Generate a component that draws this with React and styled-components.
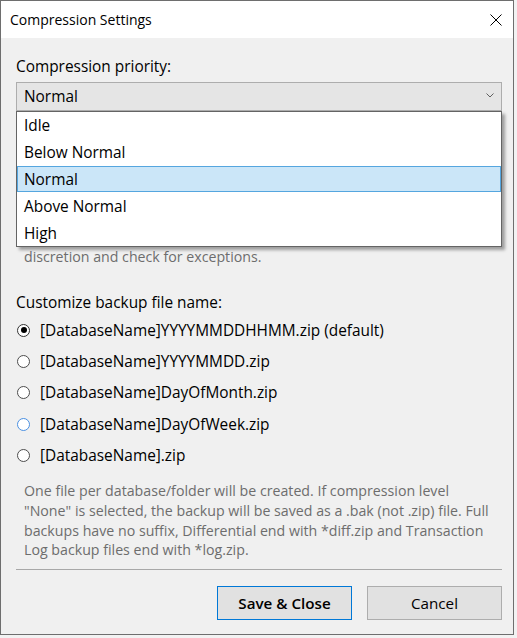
import React from "react";
import styled, { createGlobalStyle } from "styled-components";

const Global = createGlobalStyle`
  html, body {
    margin: 0;
    padding: 0;
    background: #f2f2f2;
  }
  body {
    font-family: "Open Sans", "Noto Sans", sans-serif;
    color: #000;
    -webkit-font-smoothing: antialiased;
  }
`;

const Window = styled.div`
  width: 514px;
  height: 635px;
  box-sizing: border-box;
  border: 1px solid #6e6e6e;
  background: #f0f0f0;
  display: flex;
  flex-direction: column;
`;

const TitleBar = styled.div`
  height: 37px;
  flex: none;
  background: #fff;
  display: flex;
  align-items: center;
  justify-content: space-between;
  padding: 0 11px 0 9px;
`;

const Title = styled.span`
  font-size: 14px;
  line-height: 20px;
  padding-top: 1px;
`;

const CloseButton = styled.span`
  display: flex;
  width: 12px;
  height: 12px;
  margin-top: 1px;
`;

const Body = styled.div`
  flex: 1;
  display: flex;
  flex-direction: column;
  padding: 19px 11px 13px 15px;
  position: relative;
`;

const Label = styled.div`
  font-size: 15.4px;
  line-height: 20px;
  margin-top: ${(p) => p.$top || 0}px;
`;

const ComboWrap = styled.div`
  position: relative;
  margin-top: 5px;
`;

const Combo = styled.div`
  height: 29px;
  box-sizing: border-box;
  border: 1px solid #adadad;
  background: #e5e5e5;
  display: flex;
  align-items: center;
  justify-content: space-between;
  padding: 0 7px;
  font-size: 15.4px;
`;

const Chevron = styled.svg`
  width: 8px;
  height: 5px;
  margin-top: -3px;
`;

/* open list of the combo box, drawn over the hint area below it */
const DropList = styled.ul`
  position: absolute;
  left: 0;
  right: 0;
  top: 100%;
  margin: 0;
  padding: 0;
  list-style: none;
  background: #fff;
  border: 1px solid #646464;
  box-shadow: 3px 3px 3px rgba(0, 0, 0, 0.35);
  z-index: 2;
`;

const DropItem = styled.li`
  height: ${(p) => p.$h}px;
  box-sizing: border-box;
  display: flex;
  align-items: center;
  padding-left: ${(p) => (p.$selected ? 6 : 7)}px;
  font-size: 15.4px;
  background: ${(p) => (p.$selected ? "#cbe6f8" : "transparent")};
  border: ${(p) => (p.$selected ? "1px solid #55a6df" : "none")};
`;

const Note = styled.p`
  margin: ${(p) => p.$top}px 0 0;
  padding-left: 8px;
  font-size: 14.2px;
  line-height: 19.8px;
  color: #6d6d6d;
`;

const NoteLine = styled.span`
  display: block;
  white-space: nowrap;
`;

const RadioGroup = styled.div`
  margin-top: 2px;
  display: flex;
  flex-direction: column;
`;

const RadioRow = styled.label`
  height: 31.25px;
  display: flex;
  align-items: center;
  gap: 10px;
  padding-left: 1px;
  font-size: 15.4px;
`;

const RadioCircle = styled.span`
  width: 13px;
  height: 13px;
  box-sizing: border-box;
  border-radius: 50%;
  border: 1px solid ${(p) => (p.$hover ? "#4a90e2" : p.$checked ? "#333" : "#4d4d4d")};
  background: #fff;
  display: flex;
  align-items: center;
  justify-content: center;
  flex: none;

  &::after {
    content: "";
    width: 6px;
    height: 6px;
    border-radius: 50%;
    background: #000;
    display: ${(p) => (p.$checked ? "block" : "none")};
  }
`;

const Separator = styled.hr`
  margin: 9px 0 0;
  border: none;
  border-top: 1px solid #a8a8a8;
  height: 0;
`;

const ButtonRow = styled.div`
  margin-top: 16px;
  display: flex;
  justify-content: flex-end;
  gap: 15px;
`;

const Button = styled.button`
  width: 135px;
  height: 34px;
  box-sizing: border-box;
  background: #e1e1e1;
  border: 1px solid ${(p) => (p.$primary ? "#0078d7" : "#adadad")};
  font-family: "Open Sans", "Noto Sans", sans-serif;
  font-size: 15.2px;
  font-weight: ${(p) => (p.$primary ? 600 : 400)};
  color: #000;
  padding: 0;
`;

const priorities = [
  { name: "Idle", h: 27 },
  { name: "Below Normal", h: 27 },
  { name: "Normal", h: 26 },
  { name: "Above Normal", h: 28 },
  { name: "High", h: 26 },
];

const fileNames = [
  { text: "[DatabaseName]YYYYMMDDHHMM.zip (default)", checked: true },
  { text: "[DatabaseName]YYYYMMDD.zip" },
  { text: "[DatabaseName]DayOfMonth.zip" },
  { text: "[DatabaseName]DayOfWeek.zip", hover: true },
  { text: "[DatabaseName].zip" },
];

const fileNote = [
  "One file per database/folder will be created. If compression level",
  "\"None\" is selected, the backup will be saved as a .bak (not .zip) file. Full",
  "backups have no suffix, Differential end with *diff.zip and Transaction",
  "Log backup files end with *log.zip.",
];

export default function App() {
  return (
    <>
      <Global />
      <Window>
        <TitleBar>
          <Title>Compression Settings</Title>
          <CloseButton>
            <svg width="12" height="12" viewBox="0 0 12 12">
              <path d="M0.5 0.5 L11.5 11.5 M11.5 0.5 L0.5 11.5" stroke="#000" strokeWidth="1" fill="none" />
            </svg>
          </CloseButton>
        </TitleBar>
        <Body>
          <Label>Compression priority:</Label>
          <ComboWrap>
            <Combo>
              <span>Normal</span>
              <Chevron viewBox="0 0 8 5">
                <polyline points="0.5,0.5 4,4 7.5,0.5" stroke="#606060" strokeWidth="1" fill="none" />
              </Chevron>
            </Combo>
            <DropList>
              {priorities.map((p) => (
                <DropItem key={p.name} $h={p.h} $selected={p.name === "Normal"}>
                  {p.name}
                </DropItem>
              ))}
            </DropList>
          </ComboWrap>
          <Note $top={136}>discretion and check for exceptions.</Note>
          <Label $top={26}>Customize backup file name:</Label>
          <RadioGroup>
            {fileNames.map((f) => (
              <RadioRow key={f.text}>
                <RadioCircle $checked={f.checked} $hover={f.hover} />
                <span>{f.text}</span>
              </RadioRow>
            ))}
          </RadioGroup>
          <Note $top={10}>
            {fileNote.map((l) => (
              <NoteLine key={l}>{l}</NoteLine>
            ))}
          </Note>
          <Separator />
          <ButtonRow>
            <Button $primary>Save &amp; Close</Button>
            <Button>Cancel</Button>
          </ButtonRow>
        </Body>
      </Window>
    </>
  );
}
